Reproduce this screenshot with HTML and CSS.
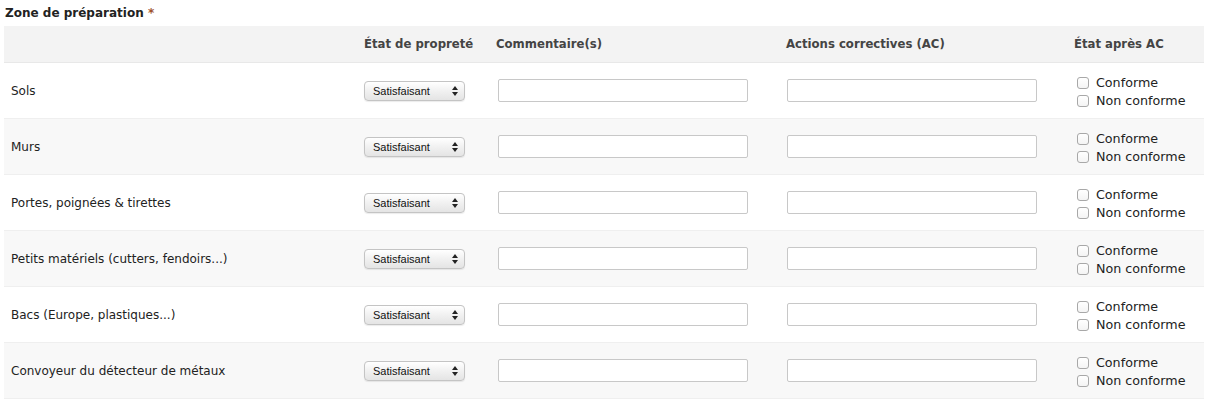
FILE: index.html
```html
<!DOCTYPE html>
<html lang="fr">
<head>
<meta charset="utf-8">
<link rel="stylesheet" href="styles.css">
</head>
<body>
<div class="field-title">Zone de préparation <span class="req">*</span></div>
<table class="grid">
  <colgroup>
    <col class="c1"><col class="c2"><col class="c3"><col class="c4"><col class="c5">
  </colgroup>
  <thead>
    <tr>
      <th></th>
      <th>État de propreté</th>
      <th>Commentaire(s)</th>
      <th>Actions correctives (AC)</th>
      <th>État après AC</th>
    </tr>
  </thead>
  <tbody>
    <tr>
      <td class="lbl">Sols</td>
      <td><span class="sel"><select><option>Satisfaisant</option><option>Non satisfaisant</option></select><svg class="arr" width="6" height="10" viewBox="0 0 6 10"><path d="M0 4 L3 0 L6 4 Z M0 6 L3 10 L6 6 Z" fill="#222"/></svg></span></td>
      <td><input class="txt" type="text"></td>
      <td><input class="txt txt2" type="text"></td>
      <td><label class="chk"><input type="checkbox"> Conforme</label><label class="chk"><input type="checkbox"> Non conforme</label></td>
    </tr>
    <tr class="alt">
      <td class="lbl">Murs</td>
      <td><span class="sel"><select><option>Satisfaisant</option><option>Non satisfaisant</option></select><svg class="arr" width="6" height="10" viewBox="0 0 6 10"><path d="M0 4 L3 0 L6 4 Z M0 6 L3 10 L6 6 Z" fill="#222"/></svg></span></td>
      <td><input class="txt" type="text"></td>
      <td><input class="txt txt2" type="text"></td>
      <td><label class="chk"><input type="checkbox"> Conforme</label><label class="chk"><input type="checkbox"> Non conforme</label></td>
    </tr>
    <tr>
      <td class="lbl">Portes, poignées &amp; tirettes</td>
      <td><span class="sel"><select><option>Satisfaisant</option><option>Non satisfaisant</option></select><svg class="arr" width="6" height="10" viewBox="0 0 6 10"><path d="M0 4 L3 0 L6 4 Z M0 6 L3 10 L6 6 Z" fill="#222"/></svg></span></td>
      <td><input class="txt" type="text"></td>
      <td><input class="txt txt2" type="text"></td>
      <td><label class="chk"><input type="checkbox"> Conforme</label><label class="chk"><input type="checkbox"> Non conforme</label></td>
    </tr>
    <tr class="alt">
      <td class="lbl">Petits matériels (cutters, fendoirs...)</td>
      <td><span class="sel"><select><option>Satisfaisant</option><option>Non satisfaisant</option></select><svg class="arr" width="6" height="10" viewBox="0 0 6 10"><path d="M0 4 L3 0 L6 4 Z M0 6 L3 10 L6 6 Z" fill="#222"/></svg></span></td>
      <td><input class="txt" type="text"></td>
      <td><input class="txt txt2" type="text"></td>
      <td><label class="chk"><input type="checkbox"> Conforme</label><label class="chk"><input type="checkbox"> Non conforme</label></td>
    </tr>
    <tr>
      <td class="lbl">Bacs (Europe, plastiques...)</td>
      <td><span class="sel"><select><option>Satisfaisant</option><option>Non satisfaisant</option></select><svg class="arr" width="6" height="10" viewBox="0 0 6 10"><path d="M0 4 L3 0 L6 4 Z M0 6 L3 10 L6 6 Z" fill="#222"/></svg></span></td>
      <td><input class="txt" type="text"></td>
      <td><input class="txt txt2" type="text"></td>
      <td><label class="chk"><input type="checkbox"> Conforme</label><label class="chk"><input type="checkbox"> Non conforme</label></td>
    </tr>
    <tr class="alt">
      <td class="lbl">Convoyeur du détecteur de métaux</td>
      <td><span class="sel"><select><option>Satisfaisant</option><option>Non satisfaisant</option></select><svg class="arr" width="6" height="10" viewBox="0 0 6 10"><path d="M0 4 L3 0 L6 4 Z M0 6 L3 10 L6 6 Z" fill="#222"/></svg></span></td>
      <td><input class="txt" type="text"></td>
      <td><input class="txt txt2" type="text"></td>
      <td><label class="chk"><input type="checkbox"> Conforme</label><label class="chk"><input type="checkbox"> Non conforme</label></td>
    </tr>
  </tbody>
</table>
</body>
</html>
```

FILE: styles.css
```css
html, body {
  margin: 0;
  padding: 0;
  background: #fff;
}
body {
  padding: 0 5px 0 4px;
  font-family: "DejaVu Sans", "Liberation Sans", sans-serif;
  font-size: 12px;
  color: #222;
}
.field-title {
  font-weight: bold;
  font-size: 12px;
  line-height: 26px;
  height: 26px;
  padding-left: 1px;
  color: #222;
}
.req {
  color: #a0522d;
}
.grid {
  width: 1200px;
  border-collapse: collapse;
  table-layout: fixed;
}
.c1 { width: 353px; }
.c2 { width: 132px; }
.c3 { width: 290px; }
.c4 { width: 288px; }
.c5 { width: 137px; }
.grid thead tr {
  background: #f3f3f3;
}
.grid th {
  height: 36px;
  padding: 0 7px;
  text-align: left;
  font-size: 11.7px;
  font-weight: bold;
  color: #444;
  border-bottom: 1px solid #e8e8e8;
  vertical-align: middle;
  white-space: nowrap;
}
.grid td {
  height: 55px;
  padding: 0 7px;
  border-bottom: 1px solid #efefef;
  vertical-align: middle;
}
.grid tr.alt {
  background: #f8f8f8;
}
.lbl {
  color: #222;
}
.sel {
  position: relative;
  display: inline-block;
  vertical-align: middle;
}
.sel select {
  appearance: none;
  -webkit-appearance: none;
  display: block;
  width: 101px;
  height: 20px;
  margin: 0;
  padding: 0 0 0 8px;
  border: 1px solid #c4c4c4;
  border-radius: 4px;
  background: linear-gradient(#ffffff, #f1f1f1 50%, #e4e4e4);
  box-shadow: 0 1px 1px rgba(0,0,0,0.08);
  font-family: "Liberation Sans", Arial, sans-serif;
  font-size: 11px;
  color: #111;
}
.sel .arr {
  position: absolute;
  right: 7px;
  top: 5px;
  pointer-events: none;
}
.txt {
  display: block;
  box-sizing: border-box;
  width: 250px;
  height: 23px;
  margin: 0 0 0 2px;
  padding: 2px 4px;
  border: 1px solid #c8c8c8;
  border-radius: 2px;
  background: #fff;
  font-family: inherit;
  font-size: 12px;
}
.txt2 {
  margin-left: 1px;
}
.chk {
  display: flex;
  align-items: center;
  height: 18px;
  font-size: 12.7px;
  color: #222;
  white-space: nowrap;
}
.chk:first-child {
  margin-top: 2px;
}
.chk input {
  appearance: none;
  -webkit-appearance: none;
  width: 12px;
  height: 12px;
  margin: 0 7px 0 3px;
  border: 1px solid #a8a8a8;
  border-radius: 3px;
  background: linear-gradient(#fff, #f4f4f4);
  box-sizing: border-box;
}
```
